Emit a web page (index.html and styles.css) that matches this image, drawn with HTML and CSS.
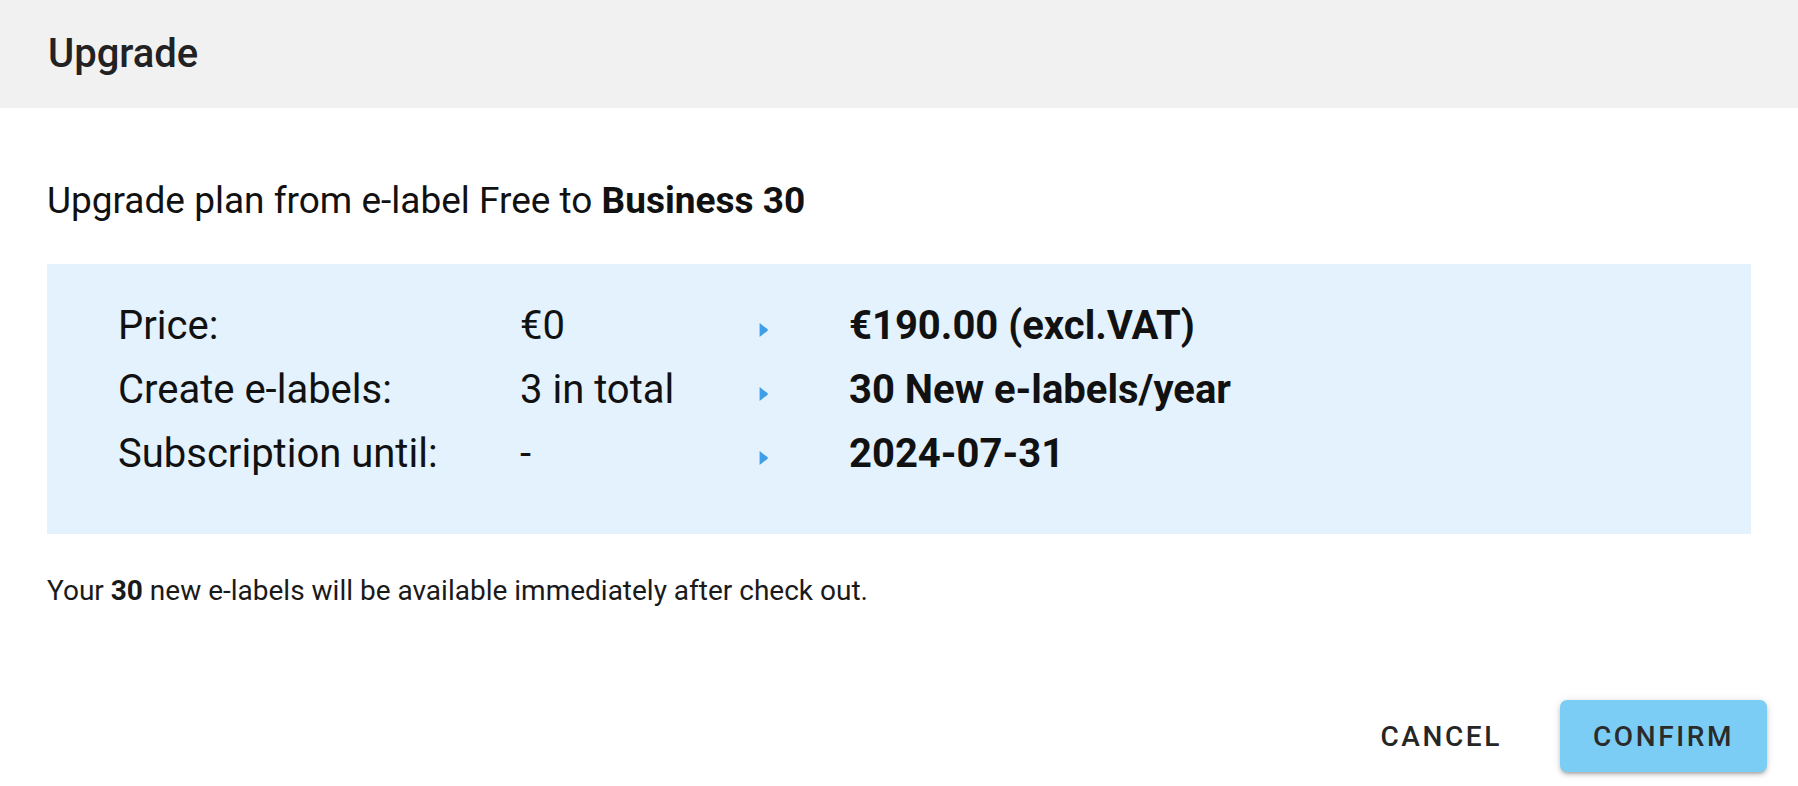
FILE: index.html
```html
<!DOCTYPE html>
<html>
<head>
<meta charset="utf-8">
<link rel="stylesheet" href="styles.css">
</head>
<body>
<div class="dialog">
  <header class="dialog-header">
    <h1 class="dialog-title">Upgrade</h1>
  </header>
  <main class="dialog-content">
    <p class="lead">Upgrade plan from e-label Free to <strong>Business 30</strong></p>
    <div class="compare">
      <div class="row">
        <span class="label">Price:</span>
        <span class="old">€0</span>
        <span class="arrow"><svg width="11" height="16" viewBox="0 0 11 16"><path d="M1.6 1.6 Q1.2 1 1.9 1.3 L9.4 7.1 Q10.2 8 9.4 8.9 L1.9 14.7 Q1.2 15 1.6 14.4 Z" fill="#3f9ee8"/></svg></span>
        <span class="new">€190.00 (excl.VAT)</span>
      </div>
      <div class="row">
        <span class="label">Create e-labels:</span>
        <span class="old">3 in total</span>
        <span class="arrow"><svg width="11" height="16" viewBox="0 0 11 16"><path d="M1.6 1.6 Q1.2 1 1.9 1.3 L9.4 7.1 Q10.2 8 9.4 8.9 L1.9 14.7 Q1.2 15 1.6 14.4 Z" fill="#3f9ee8"/></svg></span>
        <span class="new">30 New e-labels/year</span>
      </div>
      <div class="row">
        <span class="label">Subscription until:</span>
        <span class="old">-</span>
        <span class="arrow"><svg width="11" height="16" viewBox="0 0 11 16"><path d="M1.6 1.6 Q1.2 1 1.9 1.3 L9.4 7.1 Q10.2 8 9.4 8.9 L1.9 14.7 Q1.2 15 1.6 14.4 Z" fill="#3f9ee8"/></svg></span>
        <span class="new">2024-07-31</span>
      </div>
    </div>
    <p class="note">Your <strong>30</strong> new e-labels will be available immediately after check out.</p>
  </main>
  <footer class="dialog-actions">
    <button class="btn btn-text">CANCEL</button>
    <button class="btn btn-primary">CONFIRM</button>
  </footer>
</div>
</body>
</html>
```

FILE: styles.css
```css
html, body {
  margin: 0;
  padding: 0;
  background: #ffffff;
}
body {
  font-family: Roboto, "Liberation Sans", sans-serif;
  color: #1a1a1a;
}
.dialog {
  width: 100%;
  min-height: 786px;
  background: #fff;
}
.dialog-header {
  height: 108px;
  background: #f1f1f1;
  display: flex;
  align-items: center;
  padding-left: 48px;
  box-sizing: border-box;
}
.dialog-title {
  margin: 0;
  font-size: 40px;
  font-weight: 500;
  color: #222;
  line-height: 1;
}
.dialog-content {
  padding: 0 47px;
}
.lead {
  margin: 69px 0 0;
  font-size: 37px;
  line-height: 48px;
  color: #111;
}
.lead strong, .note strong {
  font-weight: 700;
}
.compare {
  margin-top: 39px;
  background: #e3f2fc;
  padding: 29px 0 49px 71px;
  display: flex;
  flex-direction: column;
}
.row {
  display: grid;
  grid-template-columns: 402px 238px 91px auto;
  align-items: center;
  height: 64px;
  font-size: 40px;
  color: #111;
}
.arrow {
  display: flex;
  align-items: center;
  padding-top: 10px;
}
.new {
  font-weight: 700;
}
.note {
  margin: 39px 0 0;
  font-size: 28px;
  line-height: 36px;
  color: #1a1a1a;
}
.dialog-actions {
  display: flex;
  justify-content: flex-end;
  align-items: center;
  gap: 34px;
  padding: 91px 31px 0 0;
}
.btn {
  font-family: Roboto, "Liberation Sans", sans-serif;
  font-size: 28px;
  font-weight: 500;
  letter-spacing: 2.6px;
  height: 72px;
  border: none;
  border-radius: 7px;
  background: transparent;
  color: #262626;
  padding: 0 24px;
  cursor: pointer;
}
.btn-primary {
  background: #7bcdf5;
  width: 207px;
  padding: 0;
  color: #2b2b2b;
  box-shadow: 0 3px 3px -2px rgba(0,0,0,0.2), 0 3px 4px 0 rgba(0,0,0,0.14), 0 1px 8px 0 rgba(0,0,0,0.12);
}
```
